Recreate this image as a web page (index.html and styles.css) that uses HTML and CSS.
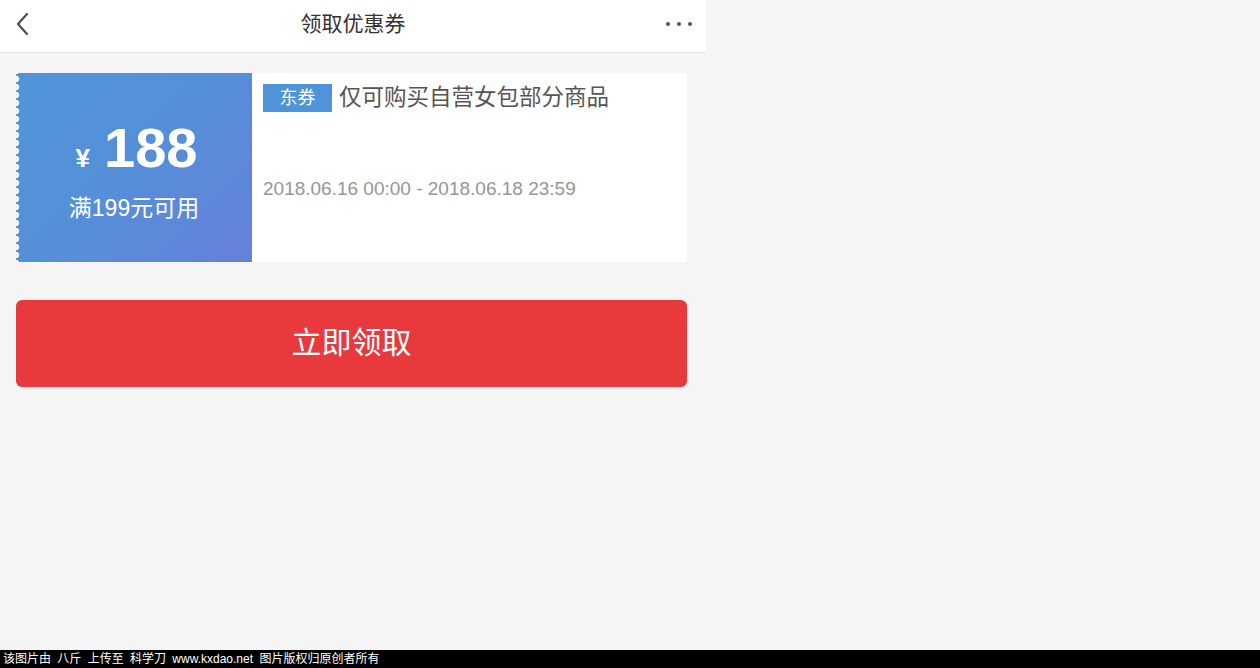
FILE: index.html
```html
<!DOCTYPE html>
<html lang="zh-CN">
<head>
    <meta charset="UTF-8">
    <title>领取优惠券</title>
    <link rel="stylesheet" href="styles.css">
</head>
<body>
    <div class="page">
        <header class="top-bar">
            <a class="back-btn" href="#">
                <svg width="16" height="24" viewBox="0 0 16 24"><path d="M13 2 L4 12 L13 22" fill="none" stroke="#555" stroke-width="2.4" stroke-linecap="round" stroke-linejoin="round"/></svg>
            </a>
            <h1>领取优惠券</h1>
            <div class="more-btn"><span></span><span></span><span></span></div>
        </header>

        <main class="content">
            <div class="coupon">
                <div class="coupon-value">
                    <div class="price"><span class="yen">¥</span><span class="amount">188</span></div>
                    <div class="limit">满199元可用</div>
                </div>
                <div class="coupon-info">
                    <div class="coupon-title"><span class="tag">东券</span>仅可购买自营女包部分商品</div>
                    <div class="coupon-date">2018.06.16 00:00 - 2018.06.18 23:59</div>
                </div>
            </div>

            <button class="get-btn">立即领取</button>
        </main>
    </div>

    <footer class="watermark">该图片由 八斤 上传至 科学刀 www.kxdao.net 图片版权归原创者所有</footer>
</body>
</html>
```

FILE: styles.css
```css
html, body {
    margin: 0;
    height: 100%;
}

body {
    font-family: "Liberation Sans", "Noto Sans CJK SC", sans-serif;
    background-color: #f5f5f5;
    display: flex;
    flex-direction: column;
}

.page {
    width: 706px;
    flex: 1;
}

.top-bar {
    height: 53px;
    background-color: #fff;
    border-bottom: 1px solid #e3e3e3;
    display: flex;
    align-items: center;
    justify-content: space-between;
    padding: 0 14px 8px 14px;
    box-sizing: border-box;
}

.top-bar h1 {
    margin: 0;
    font-size: 21px;
    font-weight: normal;
    color: #333;
    position: relative;
    left: 2px;
}

.back-btn {
    display: flex;
    width: 22px;
    height: 24px;
    align-items: center;
    margin-top: 4px;
}

.more-btn {
    display: flex;
    gap: 7px;
    width: 26px;
    margin-top: 4px;
}

.more-btn span {
    width: 4px;
    height: 4px;
    border-radius: 50%;
    background-color: #555;
}

.content {
    padding: 20px 19px 0 16px;
}

.coupon {
    display: flex;
    height: 189px;
    background-color: #fff;
}

.coupon-value {
    position: relative;
    width: 236px;
    background: linear-gradient(135deg, #4f95d8 0%, #5490d8 45%, #6680d8 100%);
    color: #fff;
    display: flex;
    flex-direction: column;
    align-items: center;
    justify-content: center;
    padding-top: 6px;
    box-sizing: border-box;
}

/* scalloped left edge */
.coupon-value::before {
    content: "";
    position: absolute;
    left: 0;
    top: 0;
    bottom: 0;
    width: 4px;
    background-image: radial-gradient(circle at 0 50%, #f5f5f5 3px, transparent 3.6px);
    background-size: 4px 8px;
    background-position: 0 2px;
}

.price {
    display: flex;
    align-items: baseline;
    margin-left: 5px;
}

.yen {
    font-size: 26px;
    font-weight: bold;
    margin-right: 14px;
}

.amount {
    font-size: 56px;
    font-weight: bold;
    line-height: 60px;
}

.limit {
    font-size: 23px;
    margin-top: 11px;
}

.coupon-info {
    flex: 1;
    padding: 11px 11px 0 11px;
}

.coupon-title {
    font-size: 22.5px;
    color: #555;
    display: flex;
    align-items: center;
    line-height: 28px;
}

.tag {
    display: inline-block;
    width: 69px;
    height: 28px;
    line-height: 28px;
    text-align: center;
    background-color: #4f93d8;
    color: #fff;
    font-size: 18px;
    margin-right: 7px;
}

.coupon-date {
    margin-top: 66px;
    font-size: 19px;
    color: #969696;
}

.get-btn {
    display: block;
    width: 100%;
    height: 87px;
    margin-top: 38px;
    padding-bottom: 8px;
    border: none;
    border-radius: 6px;
    background-color: #e8393c;
    color: #fff;
    font-family: inherit;
    font-size: 30px;
    cursor: pointer;
}

.watermark {
    height: 18px;
    line-height: 18px;
    background-color: #000;
    color: #fff;
    font-size: 12px;
    padding-left: 3px;
    word-spacing: 3px;
    white-space: nowrap;
}
```
